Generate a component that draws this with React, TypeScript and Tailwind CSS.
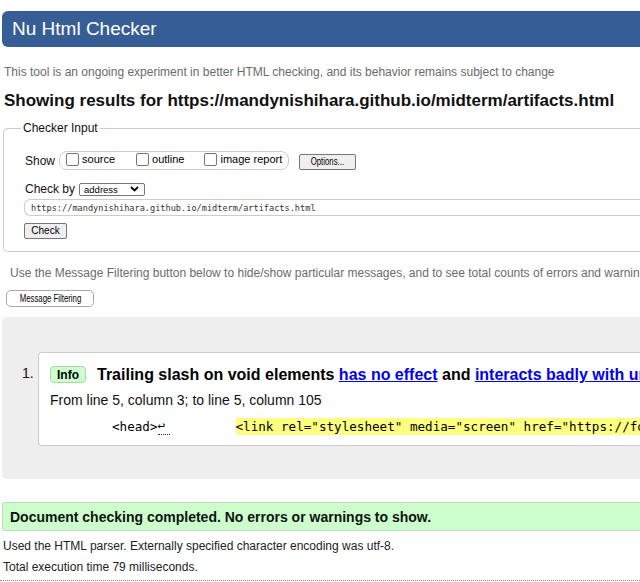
import React from "react";

function Box() {
  return (
    <span className="inline-block w-[13px] h-[13px] border border-[#767676] rounded-[2px] bg-white shrink-0" />
  );
}

export default function App() {
  return (
    <div className="w-[640px] h-[582px] overflow-hidden bg-white text-black font-['Liberation_Sans',Arial,sans-serif]">
      <div className="w-[1000px] pt-[11px]">
        <header className="ml-[2px] h-[36px] bg-[#365d95] rounded-l-[6px] flex items-center pl-[10px] text-white text-[19px] leading-[22px]">
          Nu Html Checker
        </header>

        <p className="mt-[18px] pl-[4px] text-[12px] leading-[14px] text-[#6b6b6b] whitespace-nowrap">
          This tool is an ongoing experiment in better HTML checking, and its behavior remains subject to change
        </p>

        <h2 className="mt-[12px] pl-[4px] text-[17px] leading-[20px] font-bold text-[#111] whitespace-nowrap">
          Showing results for https://mandynishihara.github.io/midterm/artifacts.html
        </h2>

        <fieldset className="mt-[10px] ml-[3px] border border-[#cccccc] rounded-l-[5px] border-r-0 pb-[12px]">
          <legend className="ml-[17px] px-[2px] text-[12px] leading-[14px] text-[#111]">Checker Input</legend>

          <div className="mt-[16px] ml-[21px] flex items-center h-[19px]">
            <span className="text-[12px] leading-[14px] text-[#111]">Show</span>
            <div className="ml-[4px] h-[19px] border border-[#cccccc] rounded-[8px] flex items-start pt-[1px] pl-[6px] pr-[6px]">
              <Box />
              <span className="ml-[3px] text-[11px] leading-[13px]">source</span>
              <span className="ml-[21px] flex">
                <Box />
              </span>
              <span className="ml-[3px] text-[11px] leading-[13px]">outline</span>
              <span className="ml-[20px] flex">
                <Box />
              </span>
              <span className="ml-[3px] text-[11px] leading-[13px]">image report</span>
            </div>
            <button className="ml-[10px] mt-[2px] w-[57px] h-[16px] border border-[#767676] rounded-[2px] bg-[#efefef] flex items-center justify-center">
              <span className="inline-block text-[10px] leading-[12px] scale-x-[0.78]">Options...</span>
            </button>
          </div>

          <div className="mt-[12px] ml-[21px] flex items-center h-[14px]">
            <span className="text-[12px] leading-[14px] text-[#111]">Check by</span>
            <span className="ml-[4px] w-[66px] h-[13px] border border-[#767676] rounded-[2px] bg-white flex items-center pl-[4px] pr-[4px]">
              <span className="text-[9.5px] leading-[11px] flex-1">address</span>
              <svg width="9" height="6" viewBox="0 0 9 6" className="mr-[1px]">
                <path d="M1 1 L4.5 4.5 L8 1" fill="none" stroke="#000" strokeWidth="1.8" />
              </svg>
            </span>
          </div>

          <div className="mt-[3px] ml-[20px] h-[17px] border border-r-0 border-[#cccccc] rounded-l-[6px] flex items-center pl-[6px]">
            <span className="font-['DejaVu_Sans_Mono',monospace] text-[8.6px] leading-[10px] text-[#333]">
              https://mandynishihara.github.io/midterm/artifacts.html
            </span>
          </div>

          <button className="mt-[7px] ml-[20px] w-[43px] h-[16px] border border-[#767676] rounded-[2px] bg-[#efefef] flex items-center justify-center text-[10px] leading-[12px]">
            Check
          </button>
        </fieldset>

        <p className="mt-[14px] pl-[10px] text-[12px] leading-[14px] text-[#6b6b6b] whitespace-nowrap">
          Use the Message Filtering button below to hide/show particular messages, and to see total counts of errors and warnings.
        </p>

        <button className="mt-[10px] ml-[6px] w-[88px] h-[17px] border border-[#aaaaaa] rounded-[5px] bg-white flex items-center justify-center">
          <span className="inline-block text-[10px] leading-[12px] scale-x-[0.78] whitespace-nowrap">Message Filtering</span>
        </button>

        <div className="mt-[10px] ml-[2px] h-[162px] bg-[#eeeeee] rounded-l-[5px] pt-[35px]">
          <div className="flex items-start">
            <span className="ml-[20px] w-[16px] mt-[13px] text-[14px] leading-[16px] text-[#111]">1.</span>
            <div className="flex-1 h-[94px] bg-white border border-r-0 border-[#cccccc] rounded-l-[4px] pl-[11px] pt-[13px]">
              <div className="flex items-center h-[17px]">
                <span className="w-[36px] h-[17px] bg-[#ccffcc] border border-[#a8d8a8] rounded-[4px] flex items-center justify-center text-[12px] font-bold leading-[14px]">
                  Info
                </span>
                <span className="ml-[11px] text-[16px] leading-[17px] font-bold whitespace-nowrap">
                  Trailing slash on void elements{" "}
                  <span className="text-[#0000ee] underline">has no effect</span> and{" "}
                  <span className="text-[#0000ee] underline">interacts badly with unquoted attribute values</span>
                </span>
              </div>
              <p className="mt-[9px] text-[14px] leading-[16px] text-[#111] whitespace-nowrap">
                From line 5, column 3; to line 5, column 105
              </p>
              <div className="mt-[10px] flex items-start h-[17px] font-['DejaVu_Sans_Mono',monospace] text-[12.6px] leading-[17px] whitespace-nowrap">
                <span className="ml-[62px]">&lt;head&gt;</span>
                <span className="w-[12px] border-b border-dotted border-[#333] leading-[16px] h-[17px]">↩</span>
                <span className="ml-[66px] bg-[#ffff80] h-[17px]">
                  &lt;link rel="stylesheet" media="screen" href="https://fonts.googleapis.com/css?family=Lato" /&gt;
                </span>
              </div>
            </div>
          </div>
        </div>

        <div className="mt-[23px] ml-[2px] h-[29px] bg-[#ccffcc] border border-r-0 border-[#c4d8c4] rounded-l-[3px] flex items-center pl-[7px]">
          <span className="text-[14px] leading-[16px] font-bold text-[#111]">
            Document checking completed. No errors or warnings to show.
          </span>
        </div>

        <p className="mt-[8px] pl-[3px] text-[12px] leading-[14px] text-[#222]">
          Used the HTML parser. Externally specified character encoding was utf-8.
        </p>
        <p className="mt-[7px] pl-[3px] text-[12px] leading-[14px] text-[#222]">Total execution time 79 milliseconds.</p>
        <div className="mt-[6px] w-[640px] border-t border-dotted border-[#888]" />
      </div>
    </div>
  );
}
